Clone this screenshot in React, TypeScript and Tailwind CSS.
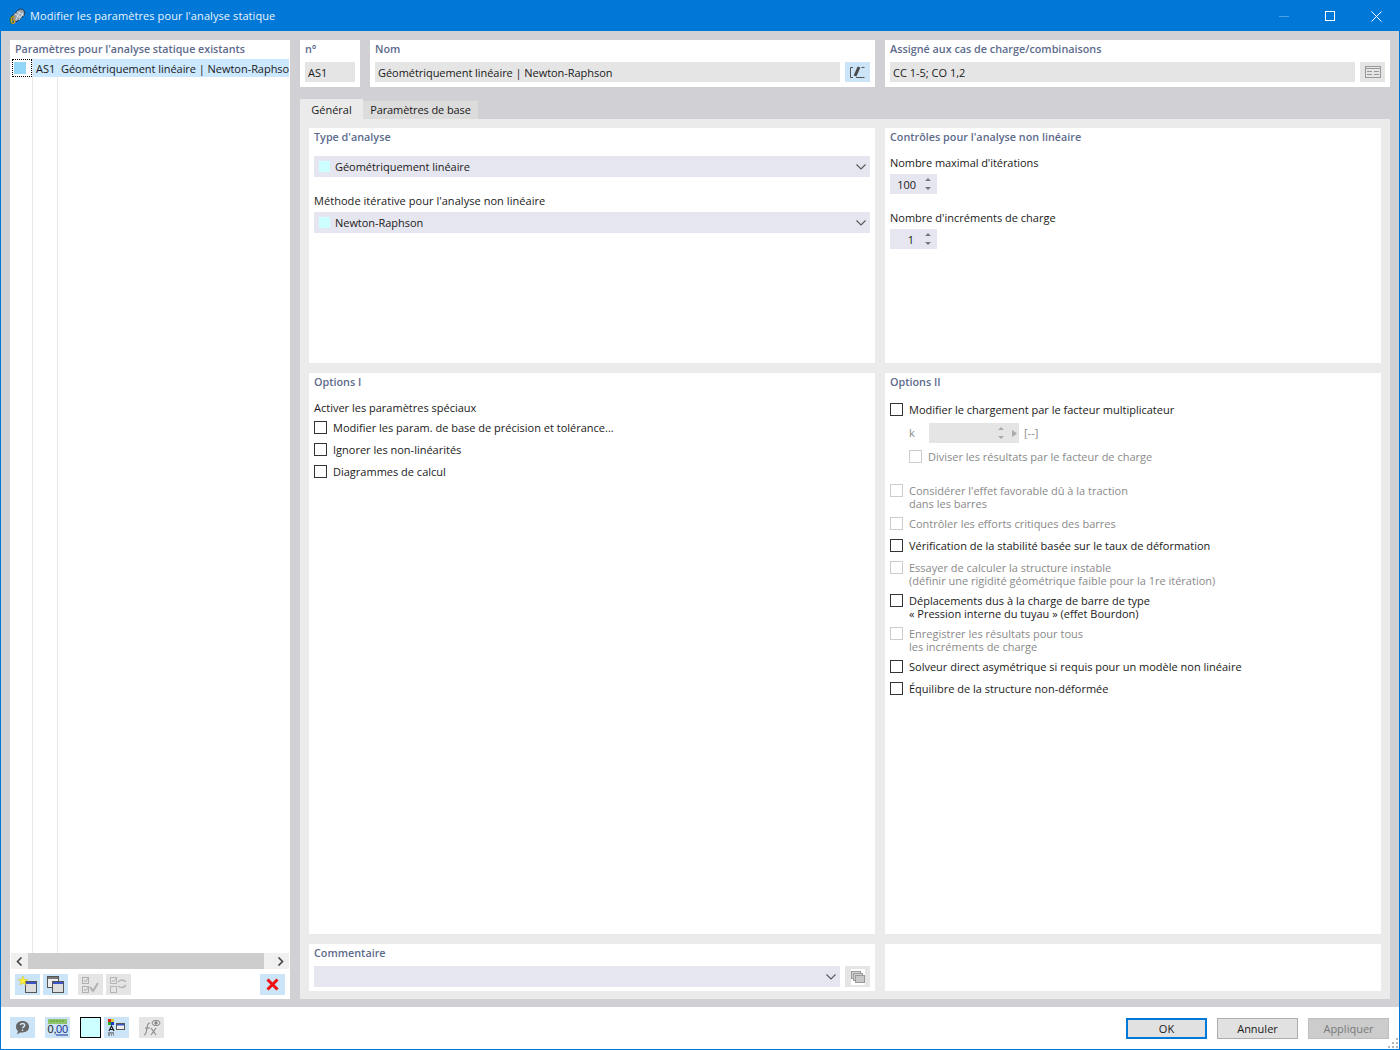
import React from "react";

const Heading = ({ children }: { children: React.ReactNode }) => (
  <div className="h-[18px] leading-[18px] font-semibold text-[#5d6b8c] text-[10.8px]">{children}</div>
);

const Chevron = () => (
  <svg width="10" height="6" viewBox="0 0 10 6" className="shrink-0">
    <path d="M0.5 0.5 L5 5 L9.5 0.5" fill="none" stroke="#555" strokeWidth="1.1" />
  </svg>
);

const Spin = ({ color = "#777" }: { color?: string }) => (
  <svg width="6" height="14" viewBox="0 0 6 14" className="shrink-0">
    <path d="M3 1 L6 4 L0 4 Z M3 13 L0 10 L6 10 Z" fill={color} />
  </svg>
);

const Check = ({ on = true }: { on?: boolean }) => (
  <span className={`block w-[13px] h-[13px] shrink-0 border bg-white ${on ? "border-[#333333]" : "border-[#cccccc]"}`} />
);

const Opt = ({ children, on = true, className = "" }: { children: React.ReactNode; on?: boolean; className?: string }) => (
  <div className={`flex items-start gap-[6px] leading-[13px] ${on ? "text-[#1a1a1a]" : "text-[#8a8a8a]"} ${className}`}>
    <Check on={on} />
    <div>{children}</div>
  </div>
);

const Select = ({ label, swatch = true }: { label: string; swatch?: boolean }) => (
  <div className="h-[21px] bg-[#e6e6f0] flex items-center pl-[5px] pr-[4px] text-[#1a1a1a] tracking-[-0.04px]">
    {swatch && <span className="w-[11px] h-[11px] bg-[#ccffff] mr-[5px]" />}
    <span className="flex-1 pt-[1px]">{label}</span>
    <Chevron />
  </div>
);

const IconBtn = ({ children, blue = true, className = "" }: { children: React.ReactNode; blue?: boolean; className?: string }) => (
  <div className={`w-[25px] h-[21px] flex items-center justify-center shrink-0 ${blue ? "bg-[#cce4f7]" : "bg-[#e5e5e5]"} ${className}`}>
    {children}
  </div>
);

export default function App() {
  return (
    <div className="w-[1400px] h-[1050px] flex flex-col bg-[#d0d0d5] border border-[#0078d7] text-[11px] overflow-hidden" style={{ fontFamily: '"Open Sans", sans-serif' }}>
      {/* title bar */}
      <div className="h-[30px] shrink-0 bg-[#0078d7] flex items-center text-white">
        <svg width="17" height="16" viewBox="0 0 17 16" className="ml-[8px] mr-[4px]">
          <path d="M3 8 L10 1.5 C12 0.5 15 1.5 15.5 4 C16 6 15 7.5 14 8.5 L8 13.5 C5 14 2.5 11 3 8 Z" fill="#9aa5b2" stroke="#1f2a38" strokeWidth="0.9" />
          <path d="M5.5 5.5 L12.5 10 M8 3.5 L14.5 7.5 M7 11.5 L11 4 M10 12 L14 5" stroke="#e4e8ec" strokeWidth="0.8" fill="none" />
          <text x="1" y="15.5" fontSize="10" fontWeight="700" fill="#f5c518" stroke="#3a3000" strokeWidth="0.3" fontFamily="Liberation Sans">6</text>
        </svg>
        <span className="flex-1 text-[#eaf4fc] tracking-[0.085px]">Modifier les paramètres pour l'analyse statique</span>
        <div className="flex items-center">
          <span className="w-[46px] flex justify-center"><span className="block w-[10px] h-px bg-[#4d9fe0]" /></span>
          <span className="w-[46px] flex justify-center"><span className="block w-[10px] h-[10px] border border-white" /></span>
          <span className="w-[46px] flex justify-center">
            <svg width="11" height="11" viewBox="0 0 11 11"><path d="M0.5 0.5 L10.5 10.5 M10.5 0.5 L0.5 10.5" stroke="#fff" strokeWidth="1" /></svg>
          </span>
        </div>
      </div>

      {/* body */}
      <div className="flex-1 flex gap-[10px] pt-[9px] pb-[8px] px-[9px] min-h-0">
        {/* left panel */}
        <div className="w-[280px] bg-white flex flex-col shrink-0">
          <div className="px-[5px] h-[18px] leading-[18px] font-semibold text-[#5d6b8c] text-[10.7px]">Paramètres pour l'analyse statique existants</div>
          <div className="flex-1 relative min-h-0 overflow-hidden">
            <div className="absolute left-[22px] top-0 bottom-0 w-px bg-[#e8e8e8]" />
            <div className="absolute left-[47px] top-0 bottom-0 w-px bg-[#e8e8e8]" />
            <div className="relative h-[18px] flex items-center mt-px mr-px">
              <div className="w-[20px] ml-[2px] mr-px h-[18px] border border-dotted border-black flex items-center pl-[1px] bg-white shrink-0">
                <span className="block w-[12px] h-[12px] bg-[#92d7f7]" />
              </div>
              <div className="flex-1 h-[18px] pt-[2px] bg-[#cce8ff] flex items-center whitespace-nowrap overflow-hidden text-[#1a1a1a] min-w-0 tracking-[-0.04px]">
                <span className="w-[25px] pl-[3px] shrink-0">AS1</span>
                <span className="pl-[3px]">Géométriquement linéaire | Newton-Raphson</span>
              </div>
            </div>
          </div>
          {/* scrollbar */}
          <div className="h-[16px] mx-px flex bg-[#f0f0f0] items-center shrink-0">
            <div className="w-[17px] flex justify-center">
              <svg width="7" height="9" viewBox="0 0 7 9"><path d="M5.5 0.5 L1.5 4.5 L5.5 8.5" fill="none" stroke="#444" strokeWidth="1.6" /></svg>
            </div>
            <div className="flex-1 h-full bg-[#cdcdcd]" />
            <div className="w-[25px] flex justify-end pr-[5px]">
              <svg width="7" height="9" viewBox="0 0 7 9"><path d="M1.5 0.5 L5.5 4.5 L1.5 8.5" fill="none" stroke="#444" strokeWidth="1.6" /></svg>
            </div>
          </div>
          {/* tool row */}
          <div className="h-[30px] shrink-0 flex items-center pl-[5px] pr-[5px] pt-[1px]">
            <IconBtn>
              <svg width="19" height="17" viewBox="0 0 19 17">
                <rect x="7.5" y="5.5" width="11" height="11" fill="#ddd" stroke="#555" />
                <rect x="8" y="6" width="10" height="2" fill="#3a55c8" />
                <path d="M5 0 L6.3 3.4 L10 3.4 L7 5.6 L8 9 L5 7 L2 9 L3 5.6 L0 3.4 L3.7 3.4 Z" fill="#fff23a" stroke="#c9b400" strokeWidth="0.4" />
              </svg>
            </IconBtn>
            <IconBtn className="ml-[3px]">
              <svg width="17" height="17" viewBox="0 0 17 17">
                <rect x="0.5" y="0.5" width="11" height="11" fill="#eee" stroke="#555" />
                <rect x="1" y="1" width="10" height="2" fill="#777" />
                <rect x="5.5" y="5.5" width="11" height="11" fill="#ddd" stroke="#555" />
                <rect x="6" y="6" width="10" height="2" fill="#3a55c8" />
              </svg>
            </IconBtn>
            <IconBtn blue={false} className="ml-[10px]">
              <svg width="17" height="17" viewBox="0 0 17 17" fill="none" stroke="#b0b0b0">
                <rect x="0.5" y="1.5" width="6" height="6" />
                <rect x="0.5" y="10.5" width="6" height="6" />
                <path d="M2 4 L3.5 6 L7 1 M2 13 L3.5 15 L7 10" />
                <path d="M8 11 L11 15 L16 7" strokeWidth="2" />
              </svg>
            </IconBtn>
            <IconBtn blue={false} className="ml-[3px]">
              <svg width="17" height="17" viewBox="0 0 17 17" fill="none" stroke="#b5b5b5">
                <rect x="0.5" y="1.5" width="6" height="6" />
                <rect x="0.5" y="10.5" width="6" height="6" />
                <path d="M2 4 L3.5 6 L7 1" />
                <path d="M8 6 C11 3 14 4 16 6 M8 10 C11 12 14 12 16 9" strokeWidth="1.4" />
              </svg>
            </IconBtn>
            <div className="flex-1" />
            <IconBtn>
              <svg width="13" height="13" viewBox="0 0 13 13"><path d="M1.5 1.5 L11.5 11.5 M11.5 1.5 L1.5 11.5" stroke="#ee1111" strokeWidth="3" /></svg>
            </IconBtn>
          </div>
        </div>

        {/* right */}
        <div className="flex-1 flex flex-col min-w-0">
          <div className="flex gap-[10px] h-[47px] shrink-0">
            <div className="w-[60px] bg-white px-[5px]">
              <Heading>n°</Heading>
              <div className="h-[20px] mt-[4px] bg-[#e5e5e5] flex items-center pl-[3px] pt-[2px] text-[#1a1a1a]">AS1</div>
            </div>
            <div className="w-[505px] bg-white px-[5px]">
              <Heading>Nom</Heading>
              <div className="flex gap-[5px] mt-[4px]">
                <div className="flex-1 h-[20px] bg-[#e5e5e5] flex items-center pl-[3px] pt-[2px] text-[#1a1a1a] tracking-[-0.05px]">Géométriquement linéaire | Newton-Raphson</div>
                <div className="w-[25px] h-[20px] bg-[#cce4f7] flex items-center justify-center">
                  <svg width="15" height="14" viewBox="0 0 15 14" fill="none" stroke="#555">
                    <path d="M3 2.5 H0.5 V12.5 H3 M6 12.5 H14.5" />
                    <path d="M5 11 L9 2" strokeWidth="3" stroke="#4a4a4a" />
                    <path d="M11.5 2.5 h3" />
                  </svg>
                </div>
              </div>
            </div>
            <div className="w-[505px] bg-white px-[5px]">
              <Heading>Assigné aux cas de charge/combinaisons</Heading>
              <div className="flex gap-[5px] mt-[4px]">
                <div className="flex-1 h-[20px] bg-[#e5e5e5] flex items-center pl-[3px] pt-[2px] text-[#1a1a1a]">CC 1-5; CO 1,2</div>
                <div className="w-[25px] h-[20px] bg-[#e5e5e5] flex items-center justify-center">
                  <svg width="16" height="12" viewBox="0 0 16 12" fill="none" stroke="#999">
                    <rect x="0.5" y="0.5" width="15" height="11" />
                    <path d="M0.5 2.5 H15.5 M2 5.5 H7 M9 5.5 H14 M2 8.5 H7 M9 8.5 H14" />
                  </svg>
                </div>
              </div>
            </div>
          </div>

          {/* tabs */}
          <div className="flex mt-[12px] h-[20px] shrink-0 items-end">
            <div className="w-[63px] h-[20px] bg-[#ebebeb] flex items-center justify-center pt-[2px] text-[#1a1a1a]">Général</div>
            <div className="w-[115px] h-[18px] bg-[#dcdcdc] flex items-center justify-center text-[#1a1a1a] tracking-[-0.1px]">Paramètres de base</div>
          </div>

          {/* panel */}
          <div className="flex-1 bg-[#ebebeb] pt-[9px] pb-[8px] pl-[9px] pr-[9px] grid grid-cols-[566px_496px] grid-rows-[235px_561px_47px] gap-[10px] min-h-0">
            <div className="bg-white px-[5px]">
              <Heading>Type d'analyse</Heading>
              <div className="mt-[10px]"><Select label="Géométriquement linéaire" /></div>
              <div className="mt-[15px] h-[18px] leading-[18px] text-[#1a1a1a] tracking-[0.05px]">Méthode itérative pour l'analyse non linéaire</div>
              <div className="mt-[2px]"><Select label="Newton-Raphson" /></div>
            </div>

            <div className="bg-white px-[5px]">
              <Heading>Contrôles pour l'analyse non linéaire</Heading>
              <div className="mt-[8px] h-[18px] leading-[18px] text-[#1a1a1a] tracking-[-0.06px]">Nombre maximal d'itérations</div>
              <div className="mt-[2px] w-[47px] h-[20px] bg-[#e6e6f0] flex items-center justify-end pr-[6px] gap-[9px] text-[#1a1a1a]">
                <span className="pt-[2px]">100</span><Spin />
              </div>
              <div className="mt-[15px] h-[18px] leading-[18px] text-[#1a1a1a]">Nombre d'incréments de charge</div>
              <div className="mt-[2px] w-[47px] h-[20px] bg-[#e6e6f0] flex items-center justify-end pr-[6px] gap-[11px] text-[#1a1a1a]">
                <span className="pt-[2px]">1</span><Spin />
              </div>
            </div>

            <div className="bg-white px-[5px]">
              <Heading>Options I</Heading>
              <div className="mt-[8px] h-[18px] leading-[18px] text-[#1a1a1a]">Activer les paramètres spéciaux</div>
              <Opt className="mt-[4px]">Modifier les param. de base de précision et tolérance...</Opt>
              <Opt className="mt-[9px]">Ignorer les non-linéarités</Opt>
              <Opt className="mt-[9px]">Diagrammes de calcul</Opt>
            </div>

            <div className="bg-white px-[5px]">
              <Heading>Options II</Heading>
              <Opt className="mt-[12px]">Modifier le chargement par le facteur multiplicateur</Opt>
              <div className="mt-[7px] h-[20px] flex items-center pl-[19px] text-[#8a8a8a]">
                <span className="w-[20px]">k</span>
                <div className="w-[90px] h-[20px] bg-[#e5e5e5] flex items-center justify-end pr-[2px] gap-[8px]">
                  <Spin color="#aaa" />
                  <svg width="5" height="7" viewBox="0 0 5 7"><path d="M0 0 L5 3.5 L0 7 Z" fill="#aaa" /></svg>
                </div>
                <span className="ml-[5px]">[--]</span>
              </div>
              <Opt on={false} className="mt-[7px] ml-[19px]">Diviser les résultats par le facteur de charge</Opt>
              <Opt on={false} className="mt-[21px]">Considérer l'effet favorable dû à la traction<br />dans les barres</Opt>
              <Opt on={false} className="mt-[7px]">Contrôler les efforts critiques des barres</Opt>
              <Opt className="mt-[9px]">Vérification de la stabilité basée sur le taux de déformation</Opt>
              <Opt on={false} className="mt-[9px]">Essayer de calculer la structure instable<br />(définir une rigidité géométrique faible pour la 1re itération)</Opt>
              <Opt className="mt-[7px]">Déplacements dus à la charge de barre de type<br />« Pression interne du tuyau » (effet Bourdon)</Opt>
              <Opt on={false} className="mt-[7px]">Enregistrer les résultats pour tous<br />les incréments de charge</Opt>
              <Opt className="mt-[7px]">Solveur direct asymétrique si requis pour un modèle non linéaire</Opt>
              <Opt className="mt-[9px]">Équilibre de la structure non-déformée</Opt>
            </div>

            <div className="bg-white px-[5px]">
              <Heading>Commentaire</Heading>
              <div className="mt-[4px] flex gap-[5px]">
                <div className="flex-1"><Select label="" swatch={false} /></div>
                <IconBtn blue={false}>
                  <svg width="16" height="16" viewBox="0 0 16 16" stroke="#999">
                    <rect x="1" y="0" width="14" height="16" fill="#fff" stroke="none" />
                    <rect x="1.5" y="2.5" width="9" height="7" fill="#d5d5d5" />
                    <rect x="3.5" y="4.5" width="9" height="7" fill="#d5d5d5" />
                    <rect x="5.5" y="6.5" width="9" height="7" fill="#c8c8c8" />
                  </svg>
                </IconBtn>
              </div>
            </div>
            <div className="bg-white" />
          </div>
        </div>
      </div>

      {/* footer */}
      <div className="h-[42px] shrink-0 bg-white relative flex items-center pl-[9px] pr-[10px] pb-[1px]">
        <IconBtn>
          <svg width="15" height="15" viewBox="0 0 15 15">
            <path d="M7.5 1 C11.5 1 14 3.5 14 6.8 C14 10.5 11 12.5 7.5 12.5 L5 12.5 L2 14.5 L3 11 C1.5 10 1 8.5 1 6.8 C1 3.5 3.5 1 7.5 1 Z" fill="#666" />
            <path d="M5.5 5 C5.5 3 9.7 3 9.7 5.2 C9.7 6.8 7.5 6.8 7.5 8.3 M7.5 9.5 V11" fill="none" stroke="#cce4f7" strokeWidth="1.5" />
          </svg>
        </IconBtn>
        <IconBtn className="ml-[10px]">
          <svg width="21" height="17" viewBox="0 0 21 17">
            <rect x="1" y="0" width="19" height="5" fill="#8fc46a" />
            <path d="M4 1 V3 M7 1 V3 M10 1 V3 M13 1 V3 M16 1 V3" stroke="#5a9a3a" />
            <text x="0.5" y="14" fontSize="11" fill="#222" fontFamily="Liberation Sans">0,</text>
            <text x="9" y="14" fontSize="11" fill="#1a2f90" fontFamily="Liberation Sans">00</text>
            <path d="M9 16 H21" stroke="#1a2f90" />
          </svg>
        </IconBtn>
        <div className="ml-[10px] w-[21px] h-[21px] bg-[#ccffff] border border-black shrink-0" />
        <IconBtn className="ml-[3px]">
          <svg width="17" height="17" viewBox="0 0 17 17">
            <rect x="0" y="0" width="3" height="3" fill="#d22" />
            <rect x="3" y="0" width="3" height="3" fill="#dc3" />
            <rect x="0" y="3" width="3" height="3" fill="#2a2" />
            <rect x="3" y="3" width="3" height="3" fill="#23c" />
            <rect x="8.5" y="4.5" width="8" height="6" fill="#eee" stroke="#555" />
            <rect x="9" y="5" width="7" height="1.5" fill="#3a55c8" />
            <path d="M1 12 L3.5 7 L6 12 M2 10.5 H5" fill="none" stroke="#111" strokeWidth="1.1" />
            <path d="M0 14 H6 M0 16 H2 M3 16 H4 M5 16 H6" stroke="#444" />
          </svg>
        </IconBtn>
        <IconBtn blue={false} className="ml-[10px]">
          <svg width="19" height="17" viewBox="0 0 19 17" fill="none" stroke="#888">
            <path d="M2 16 C4 16 4 14 5 9 C5.5 5 6.5 4 8 4 M3 9 H8" strokeWidth="1.1" />
            <path d="M9 9 L14 16 M14 9 L9 16" strokeWidth="1.1" />
            <ellipse cx="14" cy="4" rx="4" ry="2.6" />
            <circle cx="14" cy="4" r="1.2" fill="#888" />
          </svg>
        </IconBtn>
        <div className="flex-1" />
        <div className="mt-[2px] w-[81px] h-[21px] border-2 border-[#0078d7] bg-[#e1e1e1] flex items-center justify-center pt-[1px] text-[#1a1a1a]">OK</div>
        <div className="mt-[2px] ml-[10px] w-[81px] h-[21px] border border-[#adadad] bg-[#e1e1e1] flex items-center justify-center pt-[1px] text-[#1a1a1a]">Annuler</div>
        <div className="mt-[2px] ml-[10px] w-[81px] h-[21px] border border-[#bfbfbf] bg-[#cccccc] flex items-center justify-center pt-[1px] text-[#7a7a7a]">Appliquer</div>
        <svg width="11" height="11" viewBox="0 0 11 11" className="absolute right-0 bottom-0" fill="#b5b5b5">
          <rect x="8" y="0" width="2" height="2" />
          <rect x="4" y="4" width="2" height="2" /><rect x="8" y="4" width="2" height="2" />
          <rect x="0" y="8" width="2" height="2" /><rect x="4" y="8" width="2" height="2" /><rect x="8" y="8" width="2" height="2" />
        </svg>
      </div>
    </div>
  );
}
